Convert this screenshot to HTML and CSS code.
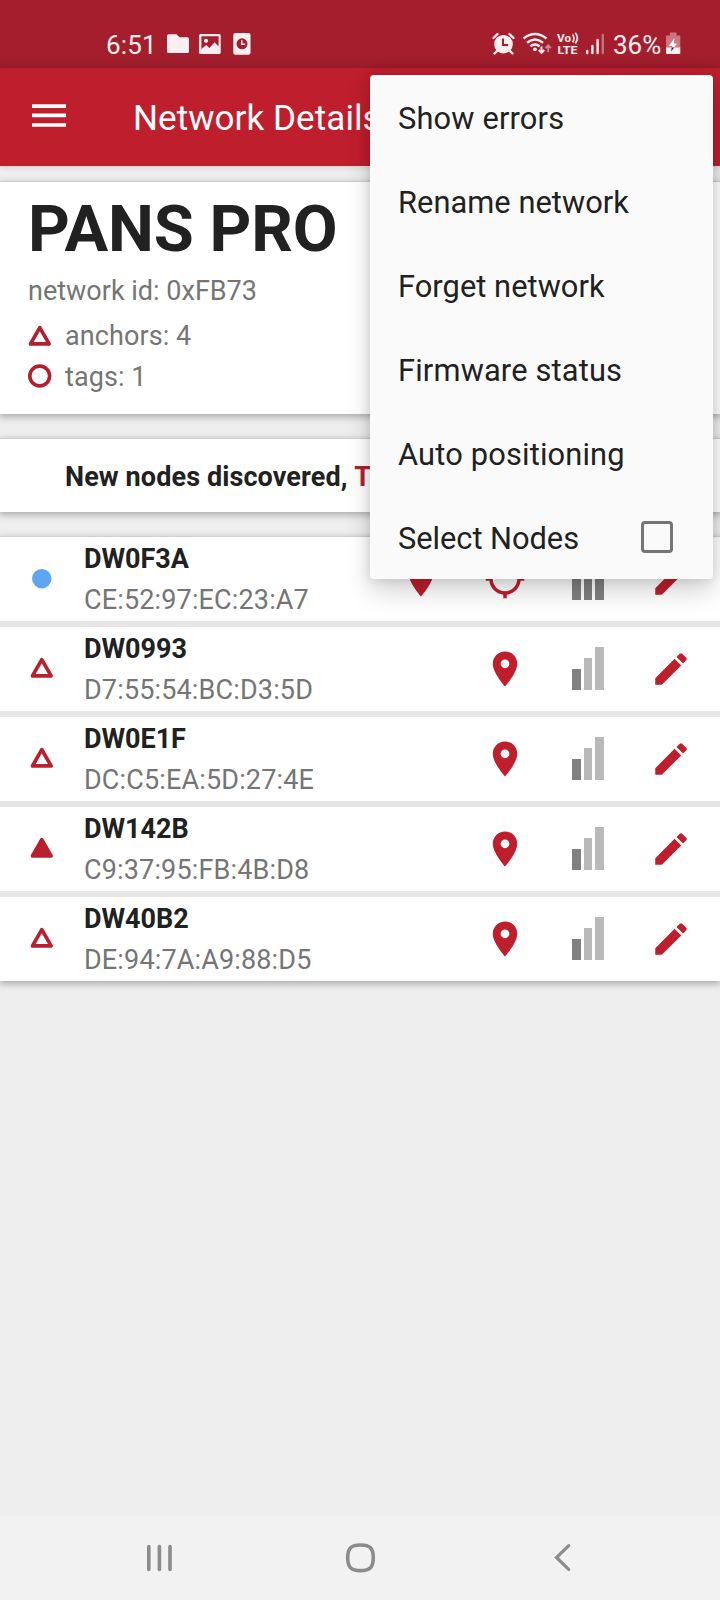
FILE: index.html
```html
<!DOCTYPE html>
<html lang="en">
<head>
<meta charset="utf-8">
<title>Network Details</title>
<link rel="stylesheet" href="styles.css">
</head>
<body>
<svg class="sprite" aria-hidden="true">
  <symbol id="pin" viewBox="0 0 24 24"><path d="M12 2C8.13 2 5 5.13 5 9c0 5.25 7 13 7 13s7-7.75 7-13c0-3.87-3.13-7-7-7zm0 9.5a2.5 2.5 0 0 1 0-5 2.5 2.5 0 0 1 0 5z"/></symbol>
  <symbol id="locate" viewBox="0 0 24 24"><path d="M20.94 11c-.46-4.17-3.77-7.48-7.94-7.94V1h-2v2.06C6.83 3.52 3.52 6.83 3.06 11H1v2h2.06c.46 4.17 3.77 7.48 7.94 7.94V23h2v-2.06c4.17-.46 7.48-3.77 7.94-7.94H23v-2h-2.06zM12 19c-3.87 0-7-3.13-7-7s3.13-7 7-7 7 3.13 7 7-3.13 7-7 7z"/></symbol>
  <symbol id="edit" viewBox="0 0 24 24"><path d="M3 17.25V21h3.75L17.81 9.94l-3.75-3.75L3 17.25zM20.71 7.04a1 1 0 0 0 0-1.41l-2.34-2.34a1 1 0 0 0-1.41 0l-1.83 1.83 3.75 3.75 1.83-1.83z"/></symbol>
  <symbol id="triangle" viewBox="0 0 24 22"><path d="M11.800 2.700 L21.100 18.900 H2.500 Z" fill="none" stroke="currentColor" stroke-width="3.700" stroke-linejoin="round"/></symbol>
  <symbol id="triangle-full" viewBox="0 0 24 22"><path d="M11.800 2.700 L21.100 18.900 H2.500 Z" stroke="currentColor" stroke-width="3.700" stroke-linejoin="round"/></symbol>
  <symbol id="bars" viewBox="0 0 42 44"><path d="M5 23h9v21H5z" fill="#808080"/><path d="M17 12h8v32h-8zM28 1h9v43h-9z" class="bars-rest"/></symbol>
</svg>

<div class="screen">
  <header class="status">
    <div class="status-side">
      <span class="clock">6:51</span>
      <svg class="status-left-icons" viewBox="166 30 86 28" fill="#faeef0">
        <path d="M168.500 34.200h8l3 3h8a1.500 1.500 0 0 1 1.500 1.500v12.800a1.500 1.500 0 0 1-1.500 1.500h-19a1.500 1.500 0 0 1-1.500-1.500V35.700a1.500 1.500 0 0 1 1.500-1.500z"/>
        <path fill-rule="evenodd" d="M200.500 34h18.700a1.500 1.500 0 0 1 1.500 1.500v17a1.500 1.500 0 0 1-1.500 1.500h-18.700a1.500 1.500 0 0 1-1.500-1.500v-17a1.500 1.500 0 0 1 1.500-1.500zm.900 2.200v12.700l4.800-4 3.200 3 5.200-5.600 4 4.200V36.200z"/>
        <circle cx="206" cy="40.800" r="2.100"/>
        <rect x="233.300" y="33" width="17.200" height="21.800" rx="2"/>
        <circle cx="242" cy="43.800" r="5.500" fill="#a41e2d"/>
        <path d="M241.800 40.200v4h3.300" fill="none" stroke="#faeef0" stroke-width="1.500"/>
      </svg>
    </div>
    <div class="status-side">
      <svg class="status-right-icons" viewBox="490 28 118 30" fill="#faeef0">
        <circle cx="503.500" cy="44.200" r="9.300"/>
        <path d="M497.500 50.500l-3 3M509.500 50.500l3 3M493.500 38l4-4M513.500 38l-4-4" stroke="#faeef0" stroke-width="2.400" stroke-linecap="round"/>
        <path d="M503 38.500v6.500h5.200" fill="none" stroke="#a41e2d" stroke-width="2"/>
        <g fill="none" stroke="#faeef0" stroke-width="2.400">
          <path d="M523.500 38.500q11.500-9 23 0M527 42.700q8-6.500 16 0M530.300 46.300q4.700-3.800 9.400 0"/>
        </g>
        <circle cx="535" cy="49.300" r="1.900"/>
        <path d="M541.500 46.500v6M538.800 50l2.700 2.900 2.700-2.900" fill="none" stroke="#faeef0" stroke-width="2"/>
        <path d="M548.200 52v-6M545.500 48.200l2.700-2.900 2.700 2.900" fill="none" stroke="#cc8890" stroke-width="1.800"/>
        <text x="557" y="41.800" class="volte" textLength="14" lengthAdjust="spacingAndGlyphs">Vo</text>
        <path d="M572.500 34.500q3 3.800 0 7.800M575.300 32.800q4.200 5.300 0 10.600" fill="none" stroke="#faeef0" stroke-width="1.700"/>
        <text x="557.500" y="54" class="volte" textLength="20" lengthAdjust="spacingAndGlyphs">LTE</text>
        <path d="M587.200 51v2M592.400 46v7" stroke="#faeef0" stroke-width="2.400" stroke-linecap="round"/>
        <path d="M597.600 40v13" stroke="#faeef0" stroke-width="2.400" stroke-linecap="round"/>
        <path d="M602.800 35v18" stroke="#c8707b" stroke-width="2.400" stroke-linecap="round"/>
      </svg>
      <span class="percent">36%</span>
      <svg class="battery" viewBox="664 31 18 26">
        <path d="M670 32.500h6.500v3h3a.8.800 0 0 1 .8.800V48H666V36.300a.8.800 0 0 1 .8-.8h3.200z" fill="#cb7882"/>
        <path d="M666 47.500h14.300v5.700a.8.800 0 0 1-.8.800H666.800a.8.800 0 0 1-.8-.8z" fill="#faeef0"/>
        <path d="M674.500 38l-5.800 8h3.800l-.8 1.500h2.300l3.300-4h-3.500z" fill="#fff"/>
        <path d="M671.600 47.500h2.600l-3 4z" fill="#3c2024"/>
      </svg>
    </div>
  </header>

  <div class="appbar">
    <svg class="burger" viewBox="0 0 34 24" fill="#fff"><path d="M0 .3h34v3.600H0zM0 9.600h34v3.600H0zM0 19.200h34v3.600H0z"/></svg>
    <h1 class="title">Network Details</h1>
  </div>

  <main class="content">
    <section class="card summary">
      <h2 class="network-name">PANS PRO</h2>
      <p class="network-id">network id: 0xFB73</p>
      <p class="count anchors"><svg class="count-icon"><use href="#triangle"/></svg>anchors: 4</p>
      <p class="count tags"><svg class="count-icon" viewBox="0 0 24 24"><circle cx="11.700" cy="12" r="9.900" fill="none" stroke="currentColor" stroke-width="3.600"/></svg>tags: 1</p>
    </section>

    <section class="card notice">New nodes discovered,&nbsp;<span class="tap">T</span></section>

    <section class="card nodes">
      <article class="node">
        <svg class="mark" viewBox="0 0 24 22"><circle cx="11.800" cy="11.700" r="9.700" fill="#5ea5f2"/></svg>
        <div class="label"><b class="name">DW0F3A</b><span class="mac">CE:52:97:EC:23:A7</span></div>
        <div class="actions">
          <svg class="icon first"><use href="#pin"/></svg>
          <svg class="icon"><use href="#locate"/></svg>
          <svg class="icon signal strong"><use href="#bars"/></svg>
          <svg class="icon"><use href="#edit"/></svg>
        </div>
      </article>
      <article class="node">
        <svg class="mark"><use href="#triangle"/></svg>
        <div class="label"><b class="name">DW0993</b><span class="mac">D7:55:54:BC:D3:5D</span></div>
        <div class="actions">
          <svg class="icon"><use href="#pin"/></svg>
          <svg class="icon signal"><use href="#bars"/></svg>
          <svg class="icon"><use href="#edit"/></svg>
        </div>
      </article>
      <article class="node">
        <svg class="mark"><use href="#triangle"/></svg>
        <div class="label"><b class="name">DW0E1F</b><span class="mac">DC:C5:EA:5D:27:4E</span></div>
        <div class="actions">
          <svg class="icon"><use href="#pin"/></svg>
          <svg class="icon signal"><use href="#bars"/></svg>
          <svg class="icon"><use href="#edit"/></svg>
        </div>
      </article>
      <article class="node">
        <svg class="mark"><use href="#triangle-full"/></svg>
        <div class="label"><b class="name">DW142B</b><span class="mac">C9:37:95:FB:4B:D8</span></div>
        <div class="actions">
          <svg class="icon"><use href="#pin"/></svg>
          <svg class="icon signal"><use href="#bars"/></svg>
          <svg class="icon"><use href="#edit"/></svg>
        </div>
      </article>
      <article class="node">
        <svg class="mark"><use href="#triangle"/></svg>
        <div class="label"><b class="name">DW40B2</b><span class="mac">DE:94:7A:A9:88:D5</span></div>
        <div class="actions">
          <svg class="icon"><use href="#pin"/></svg>
          <svg class="icon signal"><use href="#bars"/></svg>
          <svg class="icon"><use href="#edit"/></svg>
        </div>
      </article>
    </section>
  </main>

  <nav class="navbar">
    <svg class="nav-icon" viewBox="0 0 32 32"><path d="M5.800 4.500v23M16.400 4.500v23M27 4.500v23"/></svg>
    <svg class="nav-icon" viewBox="0 0 32 32"><path d="M15.500 3c9.500 0 12.800 3.300 12.800 12.800S25 28.600 15.500 28.600 2.700 25.300 2.700 15.800 6 3 15.500 3z"/></svg>
    <svg class="nav-icon" viewBox="0 0 32 32"><path class="thin" d="M22.700 3.700L10.500 15.500l12.200 11.800"/></svg>
  </nav>

  <div class="menu">
    <div class="menu-item">Show errors</div>
    <div class="menu-item narrow">Rename network</div>
    <div class="menu-item narrow">Forget network</div>
    <div class="menu-item">Firmware status</div>
    <div class="menu-item">Auto positioning</div>
    <div class="menu-item select">Select Nodes<span class="checkbox"></span></div>
  </div>
</div>
</body>
</html>
```
FILE: styles.css
```css
* { box-sizing: border-box; }
body { margin: 0; font-family: Roboto, sans-serif; color: #212121; }
h1, h2, p { margin: 0; font-weight: 400; }
svg { display: block; flex: none; fill: currentColor; }
.sprite { position: absolute; width: 0; height: 0; }

.screen {
  position: relative;
  display: flex;
  flex-direction: column;
  width: 720px;
  height: 1600px;
  overflow: hidden;
  background: #eee;
  white-space: nowrap;
}

.status {
  display: flex;
  justify-content: space-between;
  height: 68px;
  padding: 28px 38px 0 106px;
  background: linear-gradient(#a41e2d 56px, #981c2a);
  color: #faeef0;
}
.status-side { display: flex; }
.clock { width: 60px; font-size: 26px; line-height: 35px; letter-spacing: .2px; }
.status-left-icons { width: 86px; height: 28px; margin-top: 2px; }
.status-right-icons { width: 118px; height: 30px; }
.volte { font: 700 11.500px Roboto, sans-serif; }
.percent { width: 56px; padding-left: 5px; font-size: 26px; line-height: 35px; }
.battery { width: 18px; height: 26px; margin-top: 3px; }

.appbar {
  position: relative;
  display: flex;
  align-items: center;
  height: 98px;
  padding: 0 32px;
  background: #bf1e2d;
  color: #fff;
  box-shadow: 0 2px 6px rgba(0, 0, 0, .1);
}
.burger { width: 34px; height: 24px; margin-bottom: 2px; }
.title { margin-left: 67px; font-size: 35px; line-height: 50px; padding-top: 3px; letter-spacing: .07px; }

.content {
  display: flex;
  flex-direction: column;
  flex: 1;
  gap: 25px;
  padding-top: 16px;
}
.card {
  background: #fff;
  box-shadow: 0 -1px 0 #cfcfcf, 0 2px 7px 1px rgba(0, 0, 0, .28);
}
.summary { height: 232px; padding: 9px 28px 0; }
.network-name { font-size: 65px; font-weight: 700; line-height: 76px; letter-spacing: -.15px; }
.network-id { padding-top: 4px; font-size: 27px; line-height: 40px; color: #757575; }
.count { display: flex; align-items: center; gap: 13px; font-size: 27px; color: #757575; letter-spacing: .08px; }
.anchors { height: 45px; padding-top: 5px; }
.tags { height: 41px; }
.count-icon { width: 24px; height: 24px; margin-bottom: 1px; color: #b2202f; }
.notice {
  height: 73px;
  padding: 4px 65px 0;
  font-size: 27px;
  font-weight: 700;
  line-height: 69px;
  letter-spacing: .1px;
}
.tap { color: #b2202f; }

.nodes { display: flex; flex-direction: column; gap: 6px; background: #e6e6e6; }
.node { display: flex; align-items: center; height: 84px; padding: 0 28px 0 30px; background: #fff; }
.mark { width: 24px; height: 22px; margin-top: -3px; color: #b9202f; }
.label {
  display: flex;
  flex-direction: column;
  flex: 1;
  margin-left: 30px;
  padding-top: 1px;
  font-size: 27px;
}
.name { line-height: 40px; letter-spacing: -.05px; }
.mac { padding-top: 1px; line-height: 40px; color: #757575; letter-spacing: .15px; }
.actions { display: flex; align-items: center; gap: 41px; color: #bf1e2d; }
.icon { width: 42px; height: 42px; }
.first { margin-right: 1px; }
.signal { height: 44px; margin-top: -3px; color: #b9b9b9; }
.bars-rest { fill: currentColor; }
.strong { color: #808080; }

.navbar {
  display: flex;
  justify-content: space-between;
  align-items: center;
  height: 84px;
  padding: 0 142px 0 143px;
  background: #f2f2f2;
}
.nav-icon { width: 32px; height: 32px; fill: none; stroke: #8c8c8c; stroke-width: 3.600; stroke-linecap: round; }
.thin { stroke-width: 3.200; }

.menu {
  position: absolute;
  top: 75px;
  left: 370px;
  width: 343px;
  background: #fafafa;
  border-radius: 4px;
  box-shadow: 0 12px 26px rgba(0, 0, 0, .18), 0 0 12px rgba(0, 0, 0, .12);
}
.menu-item {
  display: flex;
  align-items: center;
  justify-content: space-between;
  height: 84px;
  padding: 3px 40px 0 28px;
  font-size: 30.800px;
  letter-spacing: .17px;
}
.narrow { letter-spacing: .05px; }
.select { letter-spacing: -.03px; }
.checkbox { width: 32px; height: 32px; margin-top: -4px; border: 3px solid #757575; border-radius: 4px; }
```
